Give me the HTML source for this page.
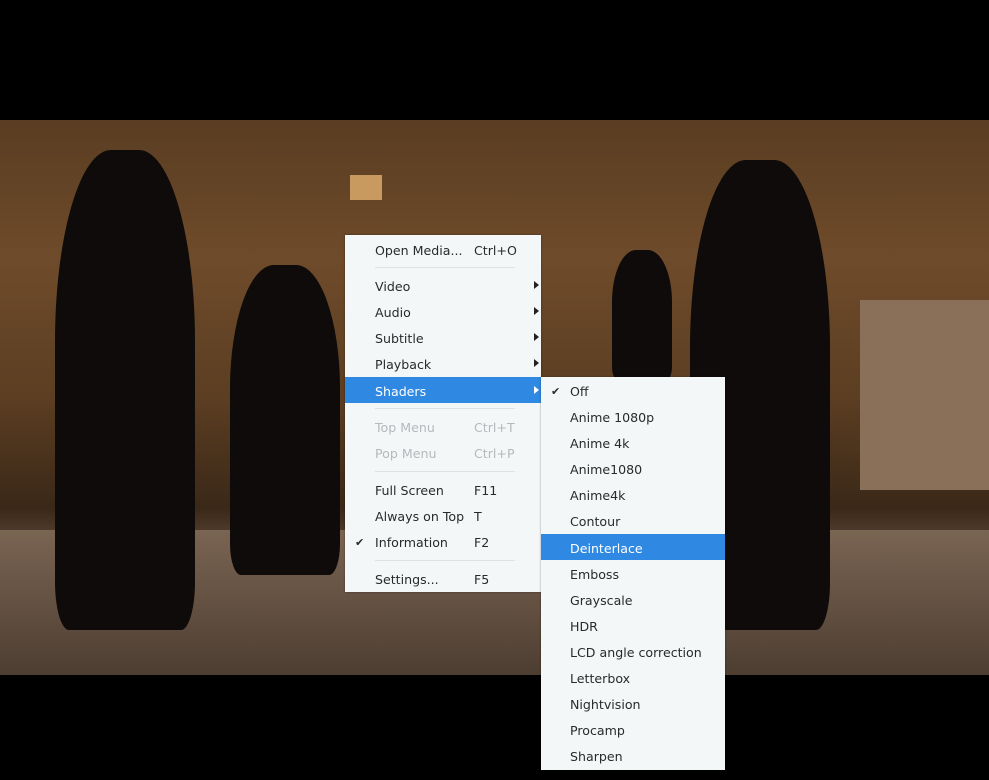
<!DOCTYPE html><html><head><style>
body{margin:0;width:989px;height:780px;background:#000;position:relative;overflow:hidden;font-family:"DejaVu Sans","Liberation Sans",sans-serif;}
.vid{position:absolute;left:0;top:120px;width:989px;height:555px;background:linear-gradient(180deg,#5a3d22 0%,#6e4b2a 25%,#5c3e22 50%,#3a2818 70%,#6a5544 80%,#4a3a2e 100%);}
.fig{position:absolute;background:#0e0b0a;border-radius:40% 40% 10% 10%;}
.menu{position:absolute;background:#f3f7f8;box-shadow:0 0 2px rgba(0,0,0,.4);font-size:12.6px;color:#2a2a2a;}
.it{position:absolute;left:0;right:0;height:26px;line-height:30px;}
.it .t{position:absolute;left:30px;}
.it .s{position:absolute;left:129px;}
.hl{background:#2f89e3;color:#fff;}
.dis{color:#b5b9bb;}
.arr{position:absolute;right:2px;top:9px;width:0;height:0;border-left:5px solid #222;border-top:4px solid transparent;border-bottom:4px solid transparent;}
.hl .arr{border-left-color:#fff;}
.sep{position:absolute;left:30px;width:140px;height:1px;background:#dde2e4;}
.ck{position:absolute;left:10px;font-size:11px;}
.sub .it .t{left:29px;}
</style></head><body>
<div class="vid">
 <div style="position:absolute;left:350px;top:55px;width:32px;height:25px;background:#c89a60"></div>
 <div style="position:absolute;left:860px;top:180px;width:129px;height:190px;background:#8a7058"></div>
 <div style="position:absolute;left:0;top:410px;width:989px;height:145px;background:linear-gradient(180deg,#7a6452,#4d3e32)"></div>
 <div class="fig" style="left:55px;top:30px;width:140px;height:480px"></div>
 <div class="fig" style="left:230px;top:145px;width:110px;height:310px"></div>
 <div class="fig" style="left:612px;top:130px;width:60px;height:130px"></div>
 <div class="fig" style="left:690px;top:40px;width:140px;height:470px"></div>
</div>
<div class="menu" style="left:345px;top:235px;width:196px;height:357px">
 <div class="it" style="top:1px"><span class="t">Open Media...</span><span class="s">Ctrl+O</span></div>
 <div class="sep" style="top:32px"></div>
 <div class="it" style="top:37px"><span class="t">Video</span><i class="arr"></i></div>
 <div class="it" style="top:63px"><span class="t">Audio</span><i class="arr"></i></div>
 <div class="it" style="top:89px"><span class="t">Subtitle</span><i class="arr"></i></div>
 <div class="it" style="top:115px"><span class="t">Playback</span><i class="arr"></i></div>
 <div class="it hl" style="top:142px"><span class="t">Shaders</span><i class="arr"></i></div>
 <div class="sep" style="top:173px"></div>
 <div class="it dis" style="top:178px"><span class="t">Top Menu</span><span class="s">Ctrl+T</span></div>
 <div class="it dis" style="top:204px"><span class="t">Pop Menu</span><span class="s">Ctrl+P</span></div>
 <div class="sep" style="top:236px"></div>
 <div class="it" style="top:241px"><span class="t">Full Screen</span><span class="s">F11</span></div>
 <div class="it" style="top:267px"><span class="t">Always on Top</span><span class="s">T</span></div>
 <div class="it" style="top:293px"><span class="ck">✔</span><span class="t">Information</span><span class="s">F2</span></div>
 <div class="sep" style="top:325px"></div>
 <div class="it" style="top:330px"><span class="t">Settings...</span><span class="s">F5</span></div>
</div>
<div class="menu sub" style="left:541px;top:377px;width:184px;height:393px">
 <div class="it" style="top:0"><span class="ck">✔</span><span class="t">Off</span></div>
 <div class="it" style="top:26px"><span class="t">Anime 1080p</span></div>
 <div class="it" style="top:52px"><span class="t">Anime 4k</span></div>
 <div class="it" style="top:78px"><span class="t">Anime1080</span></div>
 <div class="it" style="top:104px"><span class="t">Anime4k</span></div>
 <div class="it" style="top:130px"><span class="t">Contour</span></div>
 <div class="it hl" style="top:157px"><span class="t">Deinterlace</span></div>
 <div class="it" style="top:183px"><span class="t">Emboss</span></div>
 <div class="it" style="top:209px"><span class="t">Grayscale</span></div>
 <div class="it" style="top:235px"><span class="t">HDR</span></div>
 <div class="it" style="top:261px"><span class="t">LCD angle correction</span></div>
 <div class="it" style="top:287px"><span class="t">Letterbox</span></div>
 <div class="it" style="top:313px"><span class="t">Nightvision</span></div>
 <div class="it" style="top:339px"><span class="t">Procamp</span></div>
 <div class="it" style="top:365px"><span class="t">Sharpen</span></div>
</div>
</body></html>
